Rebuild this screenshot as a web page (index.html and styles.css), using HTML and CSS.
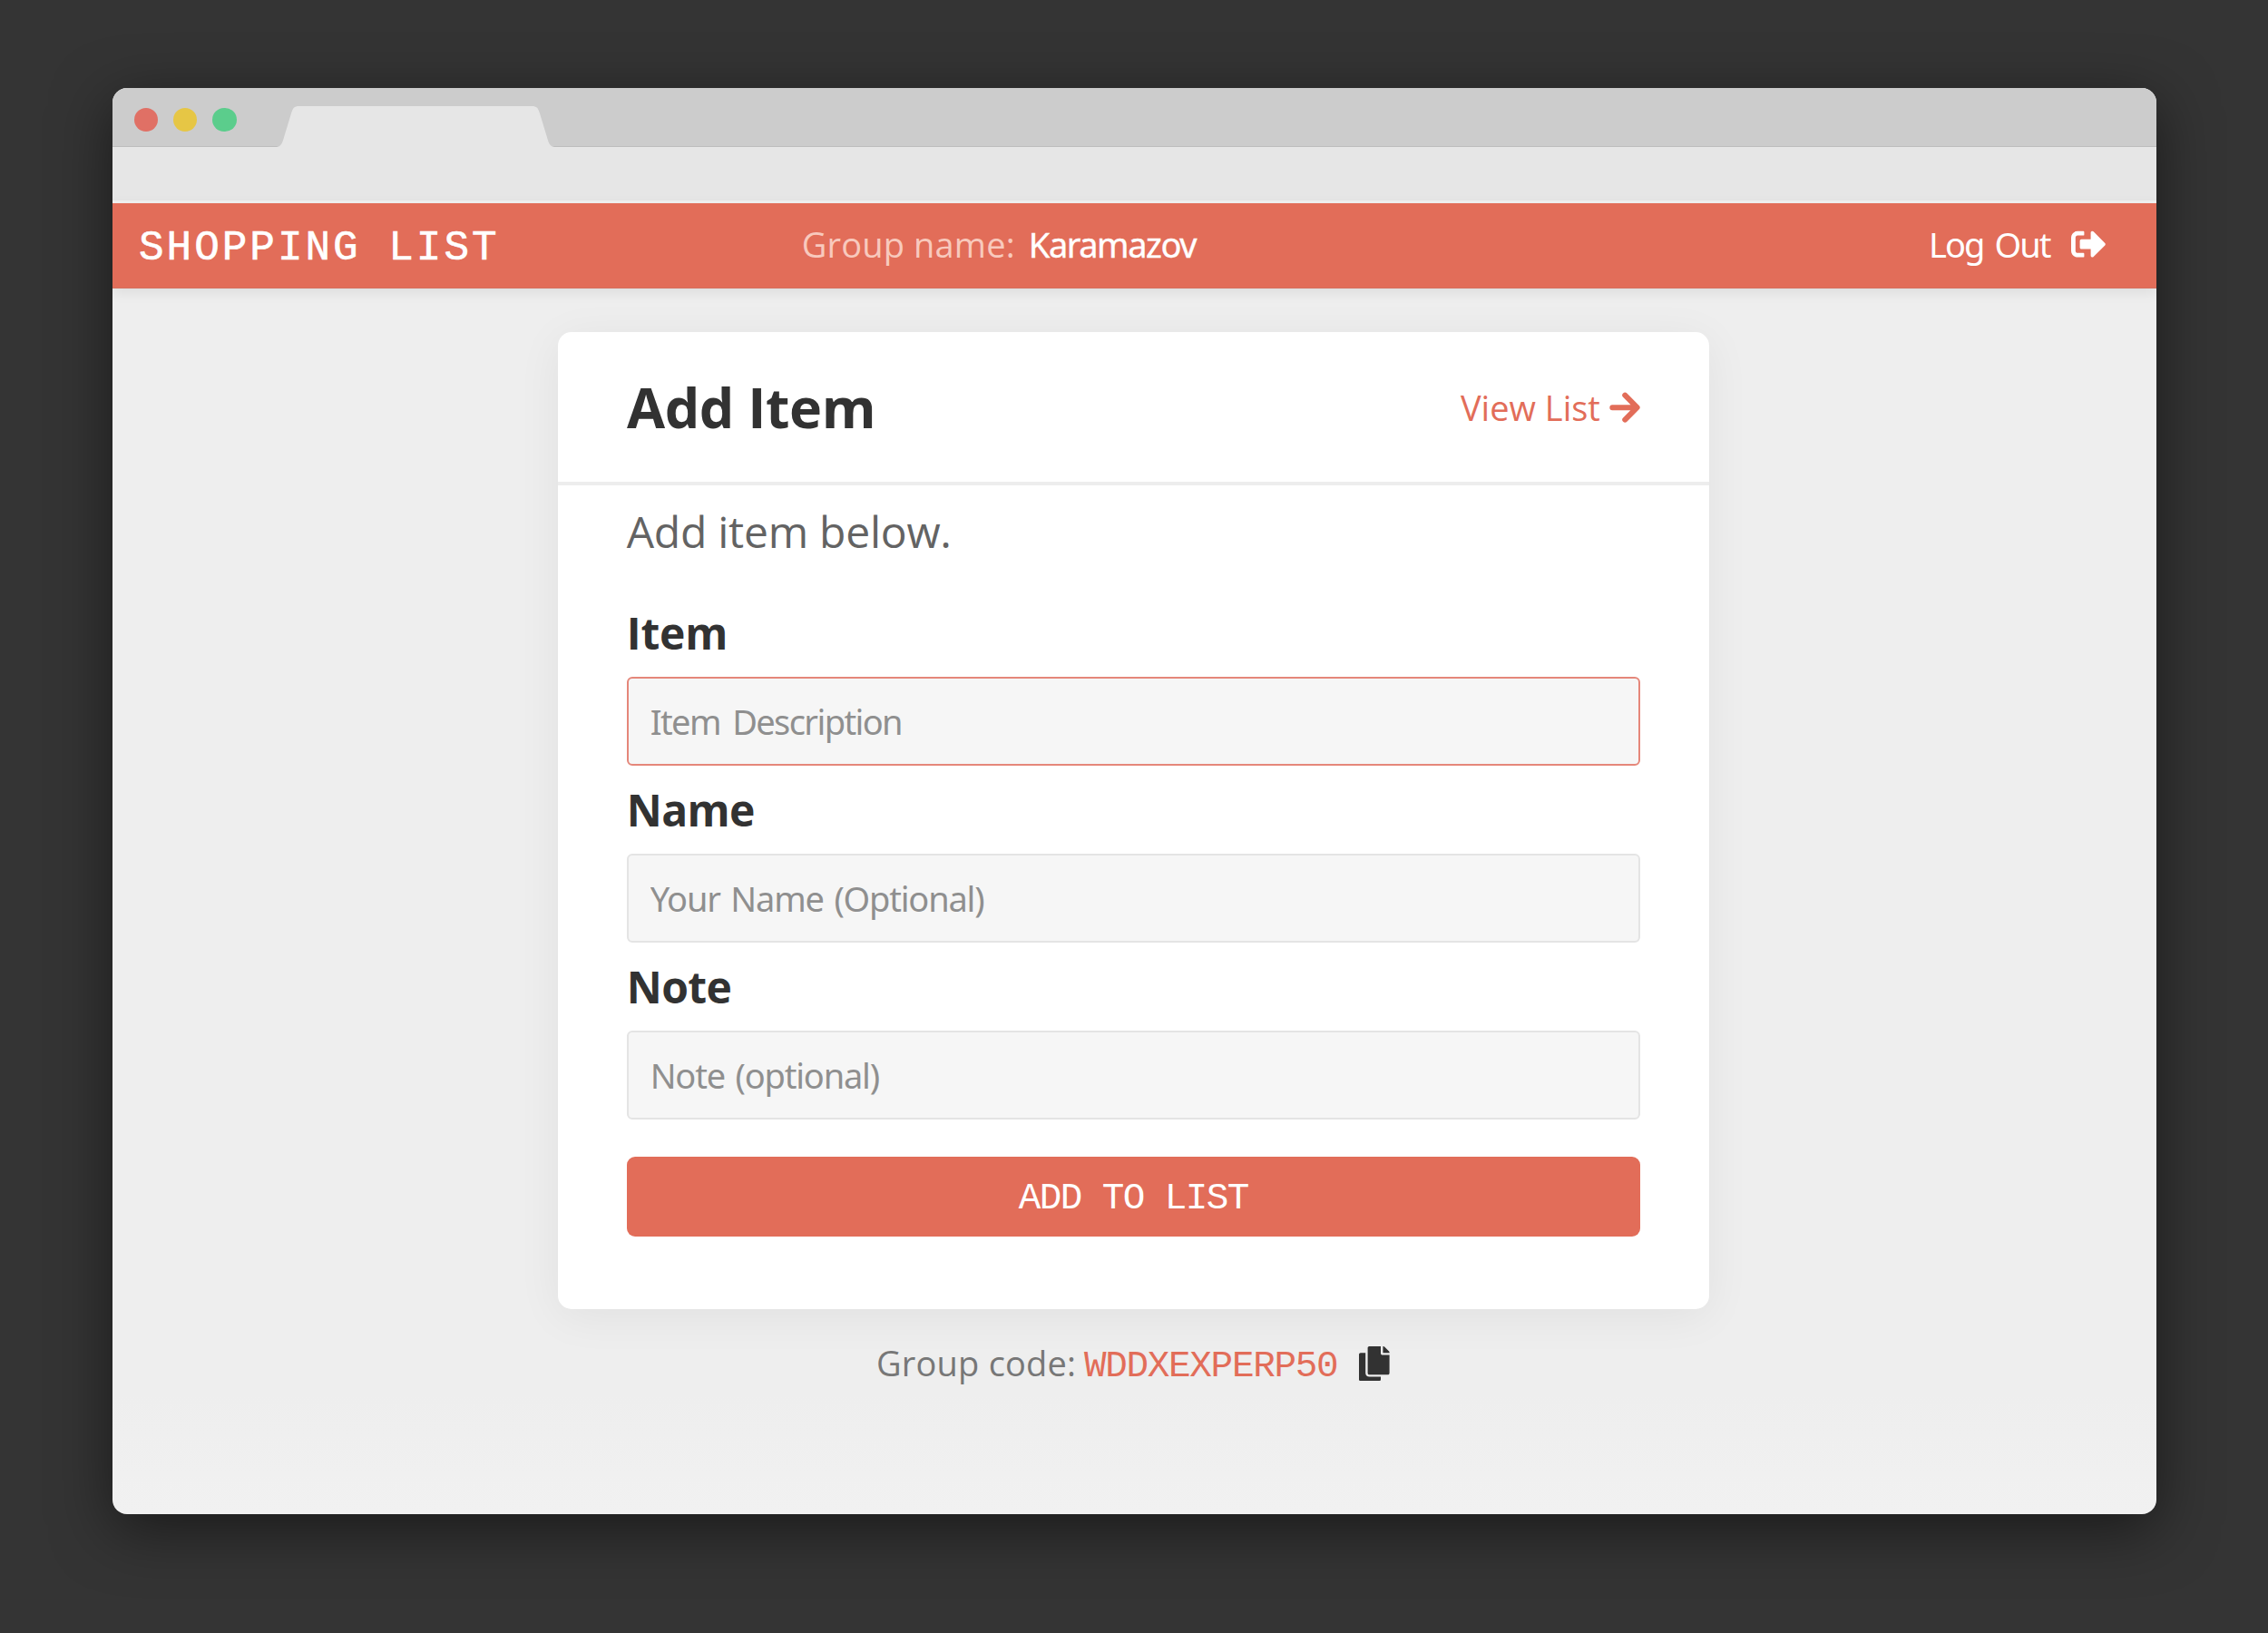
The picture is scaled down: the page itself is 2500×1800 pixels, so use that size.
FILE: index.html
```html
<!DOCTYPE html>
<html lang="en">
<head>
<meta charset="utf-8">
<title>Shopping List</title>
<link rel="stylesheet" href="styles.css">
</head>
<body>
<div class="window">
  <div class="tabbar">
    <span class="dot dot-red"></span>
    <span class="dot dot-yellow"></span>
    <span class="dot dot-green"></span>
    <svg class="tab" viewBox="0 0 306 45"><path d="M0 45c5-1 6-4 7.500-9L16 8c2-6 3-8 9-8h256c6 0 7 2 9 8l8.500 28c1.500 5 2.500 8 7.500 9z" fill="#e6e6e6"/></svg>
  </div>
  <div class="toolbar"></div>
  <header class="header">
    <h1 class="brand">SHOPPING LIST</h1>
    <span class="group-label">Group name:</span>
    <span class="group-name">Karamazov</span>
    <a class="logout"><span>Log Out</span>
      <svg class="logout-icon" viewBox="0 0 512 512"><path fill="currentColor" d="M497 273L329 441c-15 15-41 4.500-41-17v-96H152c-13.300 0-24-10.700-24-24v-96c0-13.300 10.700-24 24-24h136V88c0-21.400 25.900-32 41-17l168 168c9.300 9.400 9.300 24.600 0 34zM192 436v-40c0-6.600-5.400-12-12-12H96c-17.700 0-32-14.300-32-32V160c0-17.700 14.300-32 32-32h84c6.600 0 12-5.400 12-12V76c0-6.600-5.400-12-12-12H96c-53 0-96 43-96 96v192c0 53 43 96 96 96h84c6.600 0 12-5.400 12-12z"/></svg>
    </a>
  </header>
  <main class="main">
    <section class="card">
      <div class="card-header">
        <h2 class="card-title">Add Item</h2>
        <a class="view-list"><span>View List</span>
          <svg class="arrow-icon" viewBox="0 0 448 512"><path fill="none" stroke="currentColor" stroke-width="80" stroke-linecap="round" stroke-linejoin="round" d="M44 256h350M230 76l178 180-178 180"/></svg>
        </a>
      </div>
      <form class="form">
        <p class="intro">Add item below.</p>
        <label class="field"><span class="label">Item</span>
          <input class="input input-active input-item" type="text" placeholder="Item Description"></label>
        <label class="field"><span class="label label-tight">Name</span>
          <input class="input" type="text" placeholder="Your Name (Optional)"></label>
        <label class="field"><span class="label label-tight">Note</span>
          <input class="input" type="text" placeholder="Note (optional)"></label>
        <button class="submit" type="button">ADD TO LIST</button>
      </form>
    </section>
    <div class="code-row">
      <div class="code-text"><span class="code-label">Group code:</span><span class="code">WDDXEXPERP50</span></div>
      <svg class="copy-icon" viewBox="0 0 448 512"><path fill="currentColor" d="M320 448v40c0 13.255-10.745 24-24 24H24c-13.255 0-24-10.745-24-24V120c0-13.255 10.745-24 24-24h72v296c0 30.879 25.121 56 56 56h168zm0-344V0H152c-13.255 0-24 10.745-24 24v368c0 13.255 10.745 24 24 24h272c13.255 0 24-10.745 24-24V128H344c-13.200 0-24-10.800-24-24zm120.971-31.029L375.029 7.029A24 24 0 0 0 358.059 0H352v96h96v-6.059a24 24 0 0 0-7.029-16.970z"/></svg>
    </div>
  </main>
</div>
</body>
</html>
```

FILE: styles.css
```css
* { box-sizing: border-box; }

body {
  margin: 0;
  height: 1800px;
  padding: 97px 123px 0 124px;
  background: #343434;
  font-family: "Open Sans", sans-serif;
  overflow: hidden;
}

h1, h2, p { margin: 0; }
svg { display: block; flex: none; }

.window {
  width: 2253px;
  height: 1572px;
  border-radius: 16px;
  overflow: hidden;
  background: linear-gradient(#eee 0, #eee 1440px, #f1f1f1 100%);
  box-shadow: 0 16px 65px rgba(0, 0, 0, .5);
}

.tabbar {
  display: flex;
  height: 65px;
  padding-left: 23.5px;
  background: #ccc;
  box-shadow: inset 0 -1px #bdbdbd;
}
.dot {
  width: 26.6px;
  height: 26.6px;
  margin: 21.700px 16.8px 0 0;
  border-radius: 50%;
}
.dot-red { background: #e07065; }
.dot-yellow { background: #e6c645; }
.dot-green { background: #5bcd8c; }
.tab { width: 306px; height: 45px; margin: 20px 0 0 27px; }

.toolbar {
  height: 62px;
  background: #e6e6e6;
  border-bottom: 3px solid #f2f2f2;
}

.header {
  position: relative;
  display: flex;
  height: 94px;
  padding: 0 55.500px 0 29px;
  background: #e26d59;
  box-shadow: inset 0 -1px #d4705f, 0 4px 14px rgba(0, 0, 0, .08);
  color: #fff;
  font-size: 38px;
  line-height: 88px;
  white-space: nowrap;
}
.brand {
  width: 730.700px;
  padding-top: 6px;
  font: 400 46px/88px "Liberation Mono", monospace;
  letter-spacing: 2.980px;
  -webkit-text-stroke: .6px #fff;
}
.group-label { padding-top: 1px; color: #f8c9bd; letter-spacing: .160px; }
.group-name {
  margin-left: 15px;
  padding-top: 1px;
  font-family: "Noto Sans", sans-serif;
  letter-spacing: -1.450px;
  -webkit-text-stroke: .4px #fff;
}
.logout {
  display: flex;
  gap: 23.700px;
  margin-left: auto;
  padding-top: 1px;
  font-family: "Noto Sans", sans-serif;
  letter-spacing: -2px;
  word-spacing: 4.300px;
}
.logout-icon { width: 38.400px; height: 38.400px; margin-top: 25px; }

.main { padding-top: 48px; }

.card {
  width: 1268.500px;
  height: 1077px;
  margin-left: 491px;
  border-radius: 15px;
  background: #fff;
  box-shadow: 0 8px 50px rgba(0, 0, 0, .06);
}
.card-header {
  display: flex;
  justify-content: space-between;
  height: 169px;
  padding: 0 75.500px 0 76px;
  border-bottom: 4px solid #ededed;
  line-height: 165px;
}
.card-title {
  color: #323232;
  font-size: 61px;
  font-weight: 700;
  letter-spacing: -.450px;
}
.view-list {
  display: flex;
  align-items: center;
  gap: 10.500px;
  color: #e26d59;
  font-size: 38px;
}
.view-list span { padding-top: 1px; }
.arrow-icon { width: 33.600px; height: 38.400px; margin-top: 2px; }

.form { padding: 18px 75.500px 0 75.700px; }
.intro {
  margin-bottom: 46px;
  color: #636363;
  font-size: 48px;
  line-height: 66px;
  letter-spacing: -.250px;
}
.field { display: block; margin-bottom: 16px; }
.label {
  display: block;
  margin-bottom: 14.500px;
  color: #323232;
  font-size: 48px;
  font-weight: 700;
  line-height: 66px;
  letter-spacing: -.160px;
}
.label-tight { letter-spacing: -.580px; }
.input {
  display: block;
  width: 100%;
  height: 98.500px;
  padding: 1px 24px 0;
  border: 2px solid #e4e4e4;
  border-radius: 6px;
  background: #f6f6f6;
  font: 38px "Noto Sans", sans-serif;
  letter-spacing: -1.200px;
  word-spacing: 3px;
}
.input-active { border-color: #e5877a; }
.input-item { letter-spacing: -1.600px; word-spacing: 5px; }
.input::placeholder { color: #8f8f8f; }

.submit {
  display: block;
  width: 100%;
  height: 88.700px;
  margin-top: 40.500px;
  padding: 5px 0 0;
  border: 0;
  border-radius: 9px;
  background: #e26d59;
  color: #fff;
  font: 41px "Liberation Mono", monospace;
  letter-spacing: -1.600px;
}

.code-row {
  display: flex;
  align-items: center;
  gap: 24px;
  margin-top: 29px;
  padding-left: 842px;
  color: #323232;
}
.code-text {
  display: flex;
  align-items: baseline;
  gap: 8.700px;
  height: 60px;
  line-height: 60px;
}
.code-label { color: #777; font-size: 38px; letter-spacing: .200px; }
.code {
  color: #e26d59;
  font-family: "Liberation Mono", monospace;
  font-size: 41px;
  letter-spacing: -1.330px;
}
.copy-icon { width: 33.600px; height: 38.400px; margin-top: 2px; }
```
